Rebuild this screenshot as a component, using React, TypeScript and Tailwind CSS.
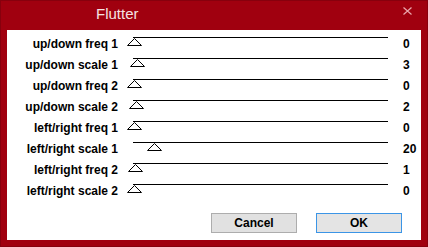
const rows = [
  { label: "up/down freq 1", value: 0 },
  { label: "up/down scale 1", value: 3 },
  { label: "up/down freq 2", value: 0 },
  { label: "up/down scale 2", value: 2 },
  { label: "left/right freq 1", value: 0 },
  { label: "left/right scale 1", value: 20 },
  { label: "left/right freq 2", value: 1 },
  { label: "left/right scale 2", value: 0 },
];

function Thumb({ value }: { value: number }) {
  return (
    <svg
      width="15"
      height="8"
      viewBox="0 0 15 8"
      className="absolute top-[1px]"
      style={{ left: value }}
    >
      <polygon points="7.5,0.5 14.5,7.5 0.5,7.5" fill="white" stroke="black" strokeWidth="1" />
    </svg>
  );
}

export default function App() {
  return (
    <div className="w-[428px] h-[247px] bg-[#a0000f] border border-[#87000d] flex flex-col font-['Liberation_Sans',Arial,sans-serif]">
      {/* Title bar */}
      <div className="h-[29px] flex items-start justify-between">
        <span className="pl-[95px] pt-[4px] text-[15px] leading-[18px] text-[#f5e2e2]">Flutter</span>
        <svg width="9" height="8" viewBox="0 0 9 8" className="mt-[6px] mr-[15px]">
          <path d="M0.5 0.5 L8.5 7.5 M8.5 0.5 L0.5 7.5" stroke="#e9a6ad" strokeWidth="1.2" />
        </svg>
      </div>

      {/* Body */}
      <div className="mx-[6px] w-[414px] h-[210px] bg-white pt-[7px] flex flex-col">
        {rows.map((r) => (
          <div key={r.label} className="flex h-[21px] items-start">
            <span className="w-[111px] text-right text-[12px] leading-[14px] font-bold text-black whitespace-nowrap">
              {r.label}
            </span>
            <div className="relative ml-[9px] w-[261px] h-[21px]">
              <div className="ml-[6px] h-px bg-black" />
              <Thumb value={r.value} />
            </div>
            <span className="ml-[15px] text-[12px] leading-[14px] font-bold text-black">{r.value}</span>
          </div>
        ))}

        <div className="mt-[8px] flex justify-end gap-[19px] pr-[19px]">
          <button className="w-[86px] h-[20px] border border-[#adadad] bg-[#e1e1e1] text-[12px] font-bold text-black leading-[18px]">
            Cancel
          </button>
          <button className="w-[86px] h-[20px] border border-[#3b95e6] bg-[#e4e4e4] text-[12px] font-bold text-black leading-[18px]">
            OK
          </button>
        </div>
      </div>
    </div>
  );
}
